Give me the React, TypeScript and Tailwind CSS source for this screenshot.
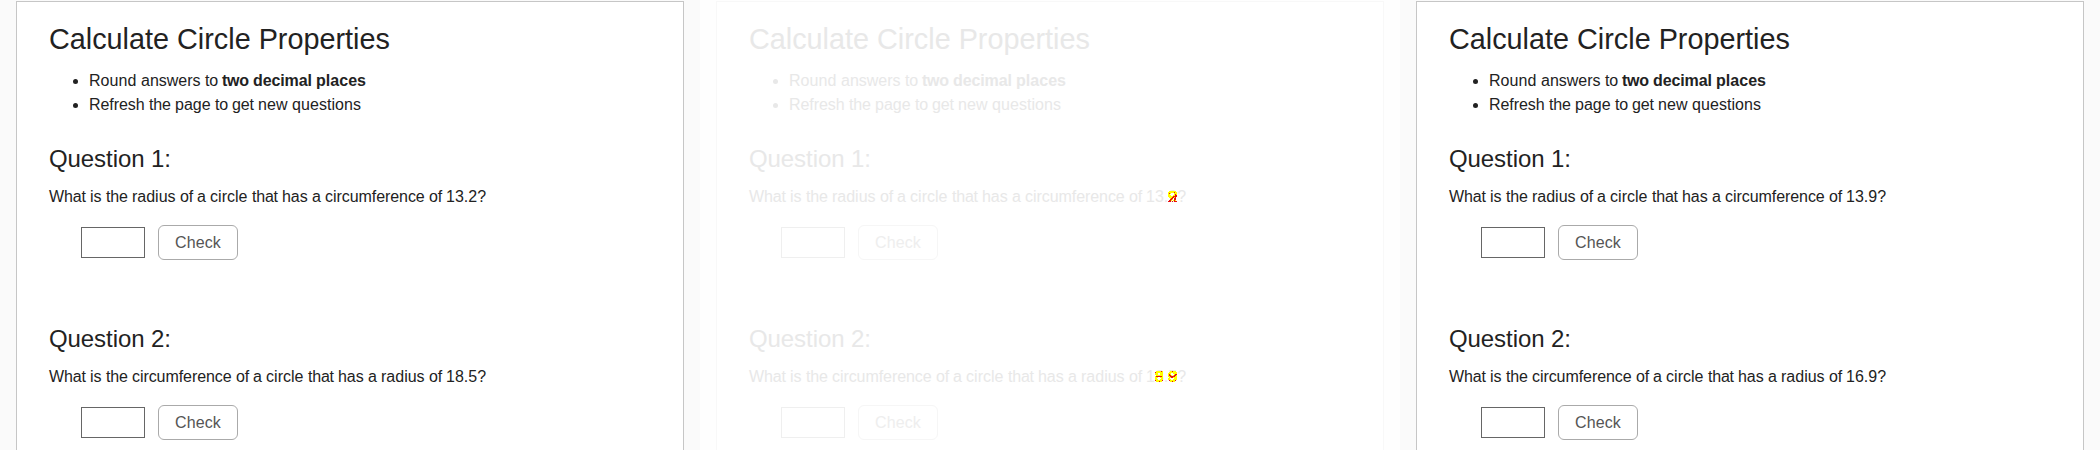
import { Fragment } from "react";

const light: Record<string, number> = {
  " ": 0.278, a: 0.556, b: 0.556, c: 0.5, d: 0.556, e: 0.556, f: 0.278, g: 0.556, h: 0.556, i: 0.222, k: 0.5,
  l: 0.222, m: 0.833, n: 0.556, o: 0.556, p: 0.556, q: 0.556, r: 0.333, s: 0.5, t: 0.278, u: 0.556,
  w: 0.722, C: 0.722, Q: 0.778, R: 0.722, W: 0.944, ".": 0.278, ":": 0.278,
};
const bold: Record<string, number> = {
  ...light, b: 0.611, c: 0.556, d: 0.611, f: 0.333, h: 0.611, i: 0.278, l: 0.278, m: 0.889, n: 0.611,
  o: 0.611, p: 0.611, r: 0.389, s: 0.556, t: 0.333, u: 0.611, w: 0.778,
};

// Sets each word on whole-pixel character advances.
function Words({ text, size = 16, strong = false }: { text: string; size?: number; strong?: boolean }) {
  const table = strong ? bold : light;
  return (
    <>
      {text.split(/(?<= )/).map((word, i) => {
        const delta = [...word].reduce((sum, ch) => {
          const w = (table[ch] ?? 0.556) * size;
          return sum + Math.round(w) - w;
        }, 0);
        return (
          <span key={i} style={{ letterSpacing: `${(delta / word.length).toFixed(4)}px` }}>
            {word}
          </span>
        );
      })}
    </>
  );
}

const markTwoNine = [
  ".YYYYYYY.",
  "YYYYYYRYY",
  "YRY...YYY",
  "YY....YRY",
  "YYY..YYRR",
  "YYYYYRRRR",
  ".YYYRRYR.",
  "..YRR.RR.",
  "..RRY.RR.",
  ".RRY.YRY.",
  "RRR.R.RRR",
];
const markEightSix = [
  ".YYYYYRY.",
  "RYYYYYYY.",
  "YYY..YYY.",
  "YYY..YYY.",
  ".YYYYYYY.",
  "YRRRRRRY.",
  "YYY..YYY.",
  "YY....YY.",
  "YYY..YYY.",
  "RYYYYYYR.",
  ".YYYRYY..",
];
const markFiveNine = [
  "..YYRYYY.",
  ".YYYYYYYY",
  "YYY..YYYY",
  "YRY...YRR",
  "YRRY.YRRY",
  "YYRRRRRYY",
  ".YYRRYYYY",
  "YY....YYY",
  "YYY..YYYY",
  ".RYYYYYR.",
  "..YYRYY..",
];

function Mark({ rows, place }: { rows: string[]; place: string }) {
  return (
    <svg className={`absolute top-[6px] ${place}`} width="9" height="11" viewBox="0 0 9 11" shapeRendering="crispEdges">
      {rows.map((row, y) => (
        <Fragment key={y}>
          {[...row].map((c, x) =>
            c === "." ? null : <rect key={x} x={x} y={y} width="1" height="1" fill={c === "Y" ? "#ffff00" : "#e81010"} />,
          )}
        </Fragment>
      ))}
    </svg>
  );
}

const normal = {
  page: "bg-[#fafafa]",
  card: "border-[#c6c6c6] text-[#222]",
  input: "border-[#666]",
  button: "border-[#aaa] text-[#555]",
};
const pale = {
  page: "bg-[#fefefe]",
  card: "border-[#f8f8f8] text-[#e8e8e8]",
  input: "border-[#efefef]",
  button: "border-[#f6f6f6] text-[#eee]",
};
type Tone = typeof normal;

interface QuestionProps {
  n: number;
  top: string;
  text: string;
  value: string;
  tone: Tone;
  marks?: { rows: string[]; place: string }[];
}

function Question({ n, top, text, value, tone, marks = [] }: QuestionProps) {
  return (
    <section className={top}>
      <h2 className="text-[24px] leading-[29px]">
        <Words text={`Question ${n}:`} size={24} />
      </h2>
      <p className="mt-3 text-base leading-6 whitespace-nowrap">
        <Words text={text} />
        <span className="relative inline-block h-6 align-top">
          <Words text={`${value}?`} />
          {marks.map((m) => (
            <Mark key={m.place} {...m} />
          ))}
        </span>
      </p>
      <div className="mt-4 ml-8 flex gap-[13px]">
        <input className={`mt-0.5 h-[31px] w-16 border ${tone.input}`} />
        <button className={`h-[35px] w-20 rounded-[6px] border ${tone.button}`}>
          <Words text="Check" />
        </button>
      </div>
    </section>
  );
}

function Panel({ a, b, tone = normal, marked = false }: { a: string; b: string; tone?: Tone; marked?: boolean }) {
  return (
    <div className={`h-[450px] w-[700px] shrink-0 overflow-hidden px-4 pt-px ${tone.page}`}>
      <main className={`h-[460px] border bg-white px-8 pt-[19px] ${tone.card}`}>
        <h1 className="text-[28.8px] leading-[36px]">Calculate Circle Properties</h1>
        <ul className="mt-3 list-disc pl-10 text-base leading-6">
          <li>
            <Words text="Round answers to " />
            <b>
              <Words text="two decimal places" strong />
            </b>
          </li>
          <li>
            <Words text="Refresh the page to get new questions" />
          </li>
        </ul>
        <Question
          n={1}
          top="mt-[27px]"
          text="What is the radius of a circle that has a circumference of "
          value={a}
          tone={tone}
          marks={marked ? [{ rows: markTwoNine, place: "left-[22px]" }] : []}
        />
        <Question
          n={2}
          top="mt-[64px]"
          text="What is the circumference of a circle that has a radius of "
          value={b}
          tone={tone}
          marks={
            marked
              ? [
                  { rows: markEightSix, place: "left-[9px]" },
                  { rows: markFiveNine, place: "left-[22px]" },
                ]
              : []
          }
        />
      </main>
    </div>
  );
}

export default function App() {
  return (
    <div className="flex h-[450px] w-[2100px] overflow-hidden font-['Liberation_Sans',sans-serif]">
      <Panel a="13.2" b="18.5" />
      <Panel a="13.2" b="18.5" tone={pale} marked />
      <Panel a="13.9" b="16.9" />
    </div>
  );
}
